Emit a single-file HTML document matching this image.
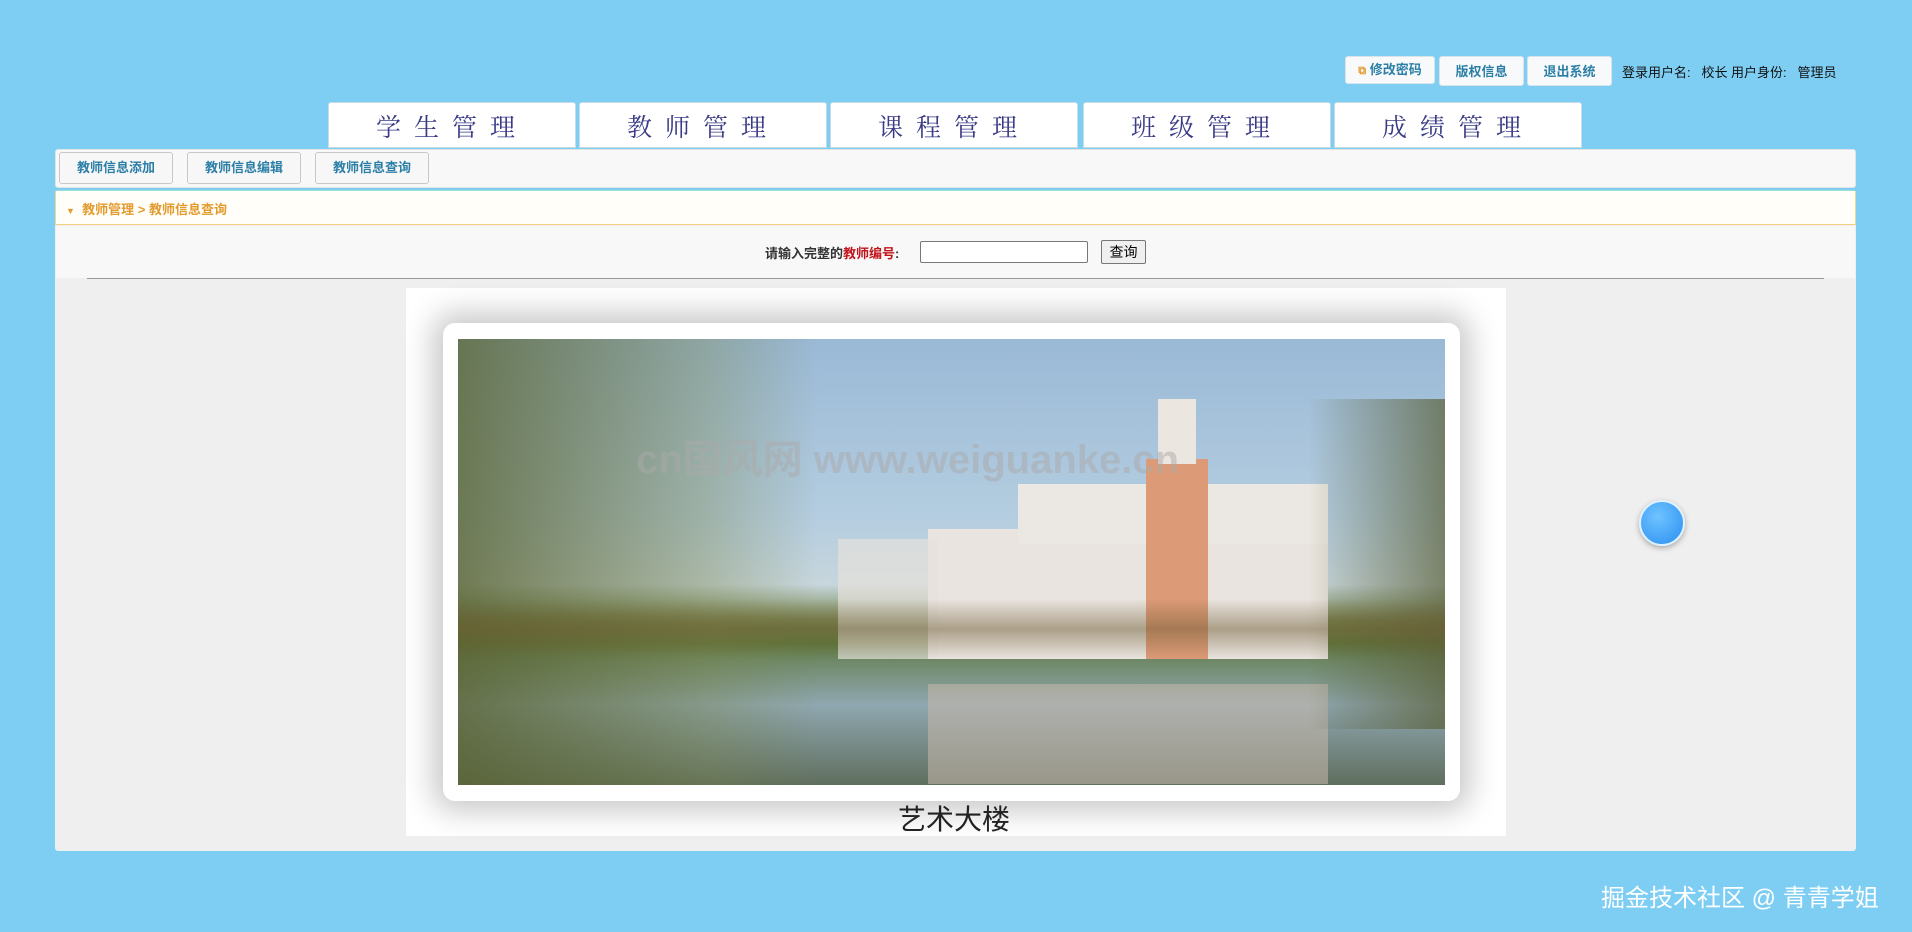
<!DOCTYPE html>
<html><head><meta charset="utf-8"><style>
*{margin:0;padding:0;box-sizing:border-box}
body{width:1912px;height:932px;background:#7ecef3;font-family:"Liberation Sans","Noto Sans CJK SC",sans-serif;position:relative;overflow:hidden}
.a{position:absolute}
.tb{position:absolute;top:56px;height:30px;background:#f7f9fa;border:1px solid #d8e4ea;border-radius:3px;color:#2b7fa6;font-size:13px;font-weight:bold;text-align:center;line-height:30px}
.tab{position:absolute;top:102px;width:248px;height:46px;background:#fff;border-radius:3px 3px 0 0;border:1px solid #c6dbe6;color:#3a3a86;font-size:25px;text-align:center;line-height:46px;letter-spacing:13px;font-family:"Noto Serif CJK SC","Noto Sans CJK SC",serif}
.sb{position:absolute;top:152px;height:32px;background:#f7f7f7;border:1px solid #c8c8c8;border-radius:3px;color:#2b7fa6;font-size:13px;font-weight:bold;text-align:center;line-height:30px;width:114px}
</style></head><body>
<div class="tb" style="left:1345px;width:90px;top:56px;height:28px;line-height:26px"><span style="color:#e39b2e;font-size:11px">⧉</span> 修改密码</div>
<div class="tb" style="left:1439px;width:85px">版权信息</div>
<div class="tb" style="left:1527px;width:85px">退出系统</div>
<div class="a" style="left:1622px;top:62px;font-size:13px;color:#111">登录用户名:&nbsp;&nbsp; 校长 用户身份:&nbsp;&nbsp; 管理员</div>
<div class="tab" style="left:328px">学生管理</div>
<div class="tab" style="left:579px">教师管理</div>
<div class="tab" style="left:830px">课程管理</div>
<div class="tab" style="left:1083px">班级管理</div>
<div class="tab" style="left:1334px">成绩管理</div>
<div class="a" style="left:55px;top:149px;width:1801px;height:39px;background:#f8f8f8;border-radius:3px;border:1px solid #e3e3e3"></div>
<div class="sb" style="left:59px">教师信息添加</div>
<div class="sb" style="left:187px">教师信息编辑</div>
<div class="sb" style="left:315px">教师信息查询</div>
<div class="a" style="left:55px;top:190px;width:1801px;height:661px;background:#efefef;border-radius:3px;border-top:2px solid #9ee0d6"></div>
<div class="a" style="left:55px;top:191px;width:1801px;height:34px;background:#fffef8;border-bottom:1px solid #f0cf80;border-left:1px solid #f0d890;border-right:1px solid #f0d890"></div>
<div class="a" style="left:66px;top:199px;font-size:13px;font-weight:bold;color:#e39b2e"><span style="font-size:9px">▼</span>&nbsp; 教师管理 &gt; 教师信息查询</div>
<div class="a" style="left:56px;top:226px;width:1799px;height:52px;background:#f8f8f8"></div>
<div class="a" style="left:765px;top:243px;font-size:13px;font-weight:bold;color:#333">请输入完整的<span style="color:#c0141b">教师编号</span>:</div>
<div class="a" style="left:920px;top:241px;width:168px;height:22px;background:#fff;border:1px solid #777;border-radius:2px"></div>
<div class="a" style="left:1101px;top:240px;width:45px;height:24px;background:#efefef;border:1px solid #777;border-radius:2px;font-size:14px;text-align:center;line-height:22px;color:#000">查询</div>
<div class="a" style="left:87px;top:278px;width:1737px;height:1px;background:#999"></div>
<div class="a" style="left:406px;top:288px;width:1100px;height:548px;background:#fff"></div>
<div class="a" style="left:443px;top:323px;width:1017px;height:478px;background:#fff;border-radius:12px;box-shadow:0 0 30px 10px rgba(0,0,0,.22)"></div>
<div class="a" style="left:458px;top:339px;width:987px;height:446px;overflow:hidden;background:linear-gradient(180deg,#9ab9d6 0%,#b4cde0 40%,#c7d6dc 55%,#7a8a55 63%,#5c7a3b 68%,#6e8866 72%,#8fa7b0 82%,#5f6e5e 100%)">
<div class="a" style="left:0;top:0;width:360px;height:446px;background:linear-gradient(90deg,rgba(90,100,50,.8),rgba(120,130,70,.35) 70%,rgba(0,0,0,0))"></div>
<div class="a" style="left:470px;top:190px;width:400px;height:130px;background:#e9e4df"></div>
<div class="a" style="left:560px;top:145px;width:310px;height:60px;background:#ebe7e2"></div>
<div class="a" style="left:688px;top:120px;width:62px;height:200px;background:#dc9a77"></div>
<div class="a" style="left:700px;top:60px;width:38px;height:65px;background:#ece6e0"></div>
<div class="a" style="left:380px;top:200px;width:100px;height:120px;background:#e5e1dc;opacity:.7"></div>
<div class="a" style="left:470px;top:345px;width:400px;height:100px;background:#c8b8ac;opacity:.55"></div>
<div class="a" style="left:850px;top:60px;width:137px;height:330px;background:linear-gradient(90deg,rgba(100,110,60,0),rgba(90,95,55,.7))"></div>
<div class="a" style="left:0;top:260px;width:987px;height:60px;background:linear-gradient(180deg,rgba(0,0,0,0),rgba(110,90,50,.5),rgba(0,0,0,0))"></div>
<div class="a" style="left:178px;top:88px;font-size:40px;font-weight:bold;color:rgba(170,170,170,.5)">cn国风网 www.weiguanke.cn</div>
</div>
<div class="a" style="left:898px;top:798px;font-size:28px;color:#222">艺术大楼</div>
<div class="a" style="left:1639px;top:500px;width:46px;height:46px;border-radius:50%;background:radial-gradient(circle at 40% 35%,#6fc3ff,#2a8ff0);box-shadow:0 2px 6px rgba(0,0,0,.3);border:2px solid #dff1ff"></div>
<div class="a" style="left:1601px;top:878px;font-size:24px;color:#fff">掘金技术社区 @ 青青学姐</div>
</body></html>
